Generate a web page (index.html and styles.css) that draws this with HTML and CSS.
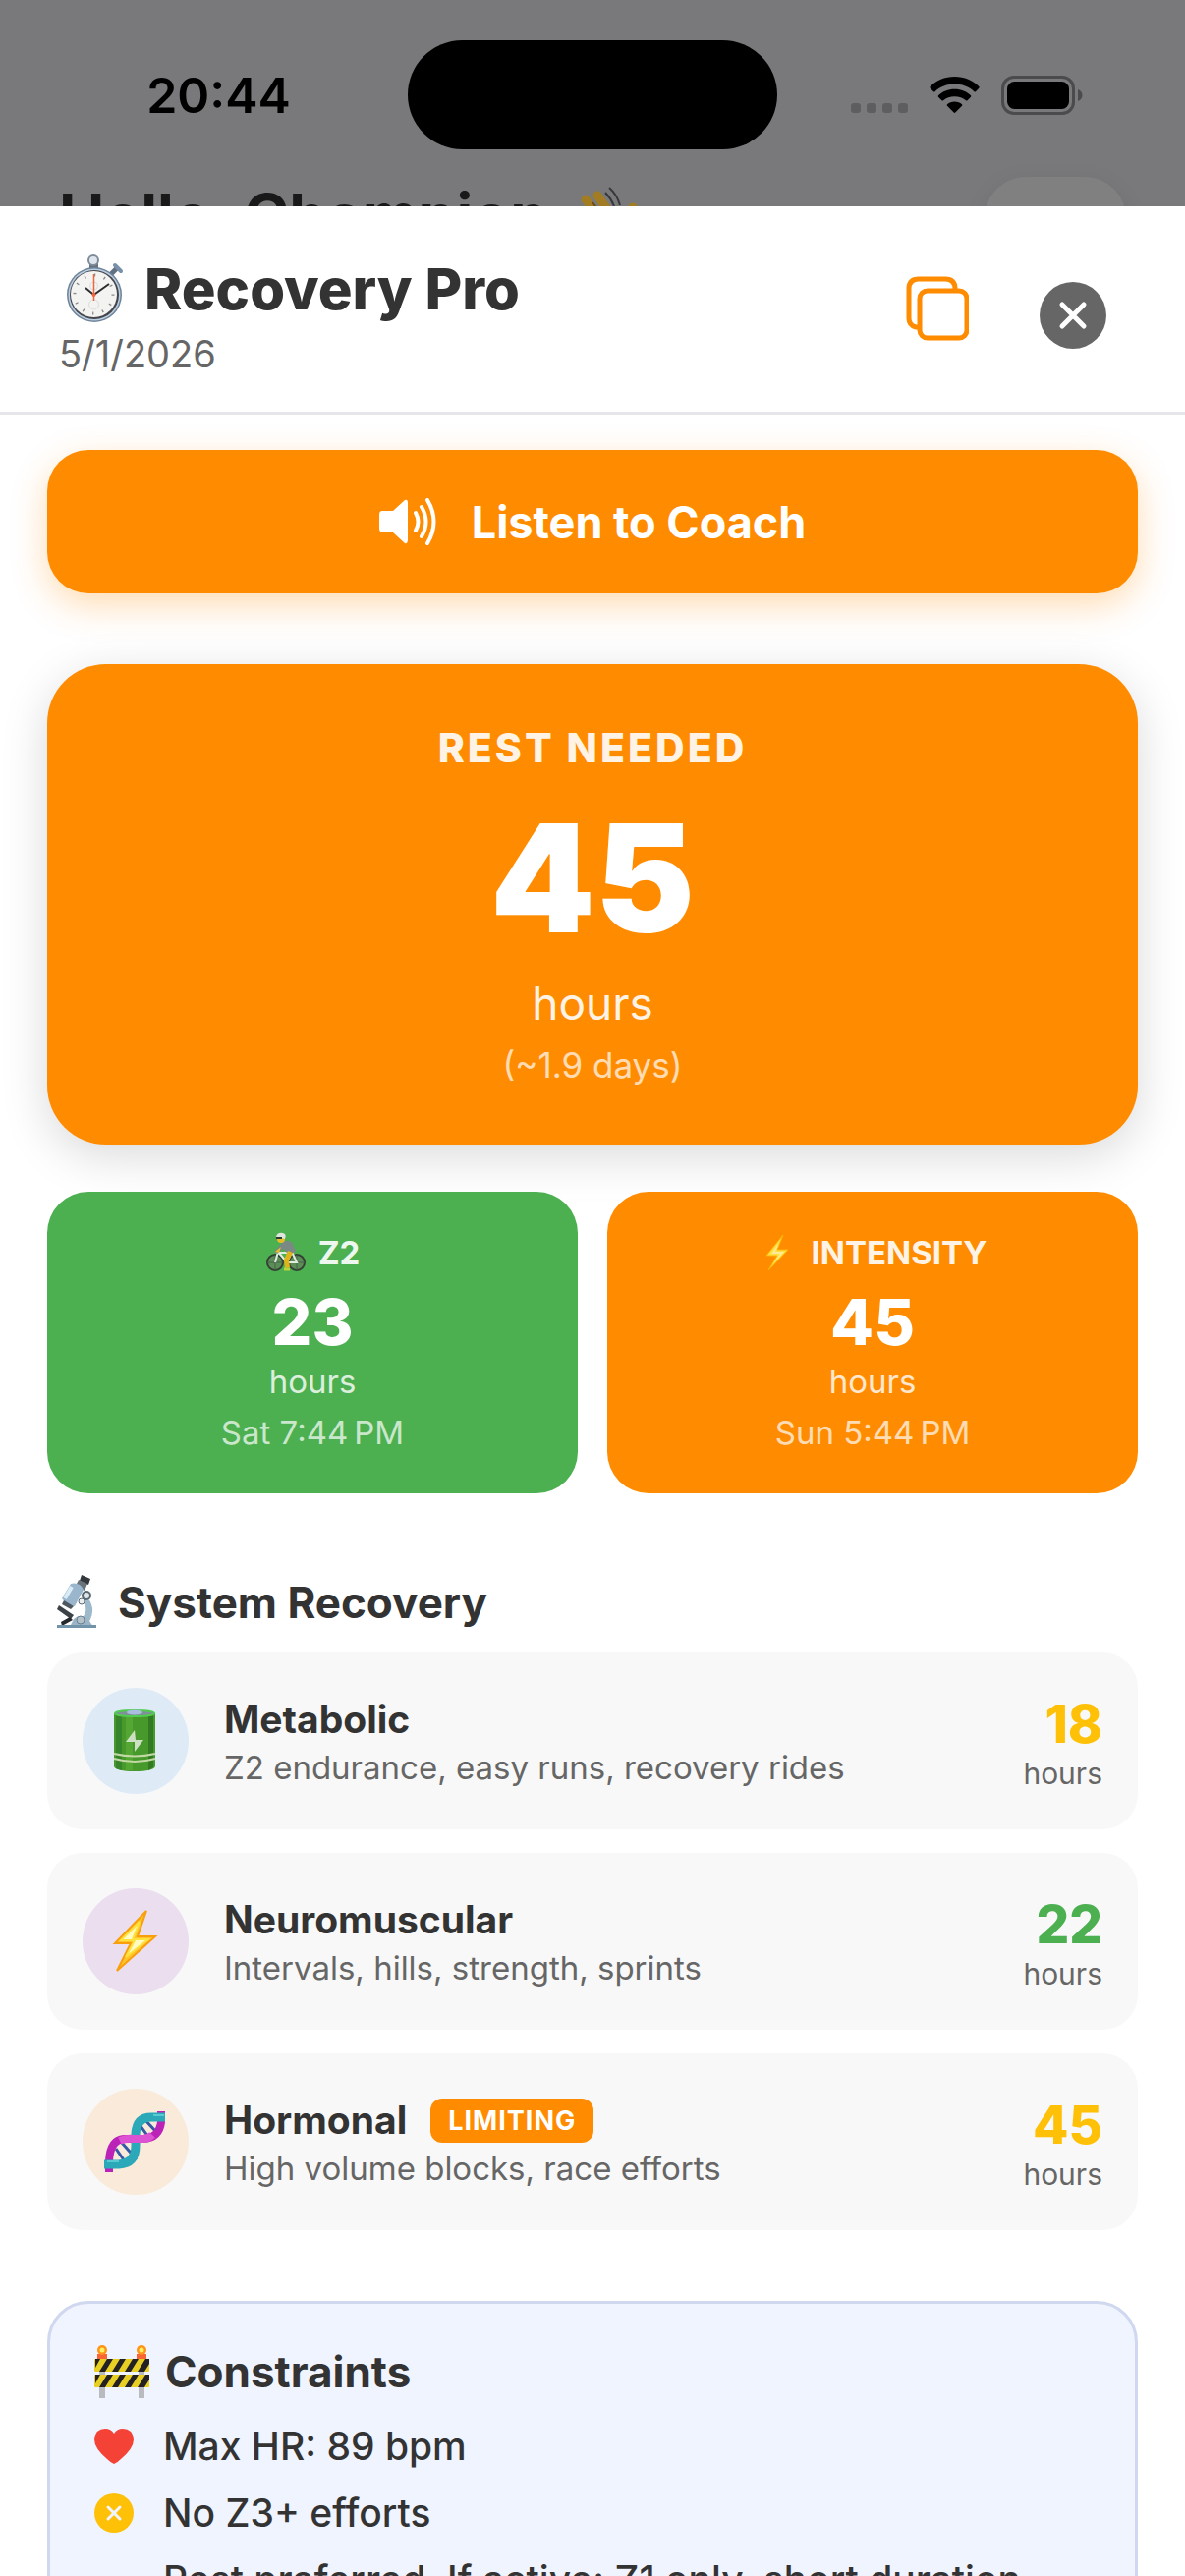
FILE: index.html
```html
<!DOCTYPE html>
<html lang="en">
  <head>
    <meta charset="UTF-8" />
    <meta name="viewport" content="width=device-width, initial-scale=1.0" />
    <title>Recovery Pro</title>
    <link rel="stylesheet" href="styles.css">
  </head>
  <body>
    <div class="app">
      <!-- Dimmed home screen behind the sheet -->
      <div class="backdrop">
        <div class="status-bar">
          <span class="status-time">20:44</span>
          <div class="island"></div>
          <div class="status-icons">
            <svg class="dots" viewBox="0 0 58 38" aria-hidden="true">
              <g fill="#5e5e60">
                <rect x="0" y="27" width="10" height="10" rx="3" />
                <rect x="16" y="27" width="10" height="10" rx="3" />
                <rect x="32" y="27" width="10" height="10" rx="3" />
                <rect x="48" y="27" width="10" height="10" rx="3" />
              </g>
            </svg>
            <svg class="wifi" viewBox="0 0 51 38" aria-hidden="true">
              <path d="M25.500 0C35.500 0 44.500 4 50.500 10.200Q51 11 50.300 11.800L47 15.200Q46.200 15.800 45.400 15.200C40 10.300 33 7.600 25.500 7.600S11 10.300 5.600 15.200Q4.800 15.800 4 15.200L.7 11.800Q0 11 .5 10.200C6.500 4 15.500 0 25.500 0Z" />
              <path d="M25.500 12.800C32 12.800 37.700 15.200 42 19.200Q42.700 20 42 20.800L38.500 24.200Q37.800 24.800 37 24.200C34 21.700 30 20.200 25.500 20.200S17 21.700 14 24.200Q13.200 24.800 12.500 24.200L9 20.800Q8.300 20 9 19.200C13.300 15.200 19 12.800 25.500 12.800Z" />
              <path d="M25.500 25.500C28.500 25.500 31 26.500 33 28.200Q33.800 29 33 29.800L26.300 36.600Q25.500 37.300 24.700 36.600L18 29.800Q17.200 29 18 28.200C20 26.500 22.500 25.500 25.500 25.500Z" />
            </svg>
            <svg class="battery" viewBox="0 0 83 40" aria-hidden="true">
              <rect x="1.500" y="1.500" width="72" height="37" rx="11.500" fill="none" stroke="#4b4b4d" stroke-width="3" />
              <rect x="6" y="6" width="63" height="28" rx="7.500" />
              <path d="M78 14C81 15.200 82.500 17.500 82.500 20S81 24.800 78 26Z" fill="#4b4b4d" />
            </svg>
          </div>
        </div>
        <div class="greeting-row">
          <div class="greeting">
            Hello, Champion
            <svg class="wave" viewBox="0 0 64 64" aria-hidden="true">
              <g stroke="#a17c22" stroke-width="9" stroke-linecap="round" fill="none">
                <path d="M6 30L24 52M10 15L32 44M22 11L42 39" />
                <path d="M47 49C50 43 52 34 58 23" />
              </g>
              <path d="M12 40L28 28L46 36L52 46Q50 62 34 62Q22 60 12 40Z" fill="#a17c22" />
              <path d="M17 18L32 38" stroke="#6d4c13" stroke-width="2" />
              <path d="M34 3Q42 10 45 21M30 8Q36 14 39 22" fill="none" stroke="#38383a" stroke-width="2" />
            </svg>
          </div>
          <div class="avatar"></div>
        </div>
      </div>

      <div class="sheet">
        <header class="sheet-header">
          <div>
            <h1>
              <svg class="emoji-title" viewBox="0 0 72 72" aria-hidden="true">
                <rect x="31" y="9" width="9" height="12" fill="#66727f" />
                <circle cx="35" cy="7" r="5" fill="#dfe5ec" stroke="#7e8b9b" stroke-width="2" />
                <path d="M53 21L59 15" stroke="#5f7183" stroke-width="5" />
                <path d="M57 12L63 18" stroke="#7890a8" stroke-width="4" stroke-linecap="round" />
                <circle cx="36" cy="42" r="28" fill="#6e8399" />
                <circle cx="36" cy="42" r="26.500" fill="#b9cee0" />
                <circle cx="36" cy="42" r="25" fill="#45454b" />
                <circle cx="35.500" cy="41.500" r="23.500" fill="#f3f3f2" />
                <circle cx="35.500" cy="41.500" r="19.500" fill="none" stroke="#888" stroke-width="3" stroke-dasharray="1.300 8.900" />
                <circle cx="35.500" cy="52" r="5" fill="none" stroke="#ddd" />
                <circle cx="35.500" cy="33" r="4" fill="none" stroke="#ddd" />
                <path d="M27 35L35.500 42L51 31" fill="none" stroke="#2d2d30" stroke-width="2" />
                <path d="M35.500 21V48" stroke="#f2643c" stroke-width="1.500" />
                <circle cx="35.500" cy="42" r="2" fill="#f2643c" />
              </svg>
              Recovery Pro
            </h1>
            <p class="date">5/1/2026</p>
          </div>
          <div class="actions">
            <button type="button" class="icon-button" aria-label="Copy">
              <svg class="icon-copy" viewBox="0 0 64 80" aria-hidden="true">
                <g fill="none" stroke="#ff8c00" stroke-width="5">
                  <path d="M12 52H10Q3 50 3 43V13Q3 3 13 3H40Q50 3 50 13V14" />
                  <rect x="14" y="15" width="48" height="48" rx="8" />
                </g>
              </svg>
            </button>
            <button type="button" class="icon-button" aria-label="Close">
              <svg class="icon-close" viewBox="0 0 68 68" aria-hidden="true">
                <circle cx="34" cy="34" r="34" fill="#666" />
                <path d="M23 23L45 45M45 23L23 45" stroke="#fff" stroke-width="5" stroke-linecap="round" />
              </svg>
            </button>
          </div>
        </header>

        <main class="content">
          <button type="button" class="listen">
            <svg class="icon-speaker" viewBox="0 0 60 48" aria-hidden="true">
              <path d="M3 13H14L26 2Q29 1 29 5V42Q29 47 26 46L14 35H3Q0 34 0 31V17Q0 13 3 13Z" fill="#fff" />
              <path d="M37 15Q42 24 37 33M43 9Q52 24 43 39M49 2Q62 24 49 46" fill="none" stroke="#fff" stroke-width="4" stroke-linecap="round" />
            </svg>
            Listen to Coach
          </button>

          <section class="rest-card">
            <h2 class="rest-label">REST NEEDED</h2>
            <p class="rest-value">45</p>
            <p class="rest-unit">hours</p>
            <p class="rest-days">(~1.9 days)</p>
          </section>

          <div class="zones">
            <section class="zone zone-green">
              <h3>
                <svg class="emoji-small" viewBox="0 0 42 42" aria-hidden="true">
                  <g fill="#5f8a58" stroke="#303431" stroke-width="2">
                    <circle cx="10" cy="31" r="8" />
                    <circle cx="32" cy="31" r="8" />
                  </g>
                  <path d="M10 23V39M2 31H18M32 23V39M24 31H40" stroke="#47594a" stroke-width="1" />
                  <path d="M10 31L13 20L22 31L27 20M13 21H26M22 31H32L27 20" fill="none" stroke="#f0f3f0" stroke-width="2" />
                  <path d="M17 11Q24 6 28 12L31 20L24 23L18 17L12 22L9 20Z" fill="#81858b" />
                  <path d="M23 19L28 21L24 29L25 36L20 37L19 28Z" fill="#f1b414" />
                  <path d="M16 15L10 20L14 21Z" fill="#f6bf28" />
                  <circle cx="16" cy="7" r="4" fill="#f6bf28" />
                  <path d="M11 5Q12 0 18 1Q22 2 20 7Z" fill="#ececec" />
                  <path d="M11 6H17" stroke="#27302e" stroke-width="2" />
                  <path d="M19 38H25" stroke="#c6d93a" stroke-width="3" />
                </svg>
                Z2
              </h3>
              <p class="zone-value">23</p>
              <p class="zone-unit">hours</p>
              <p class="zone-time">Sat 7:44&#8239;PM</p>
            </section>
            <section class="zone zone-orange">
              <h3>
                <svg class="emoji-small" viewBox="0 0 42 42" aria-hidden="true">
                  <path d="M25 3L8 24H19L10 39L30 18H19Z" fill="#ffe94f" stroke="#ffb900" stroke-width="1" />
                  <path d="M21 11L13 22H22L15 32L26 20H17Z" fill="#fff6a4" />
                </svg>
                INTENSITY
              </h3>
              <p class="zone-value">45</p>
              <p class="zone-unit">hours</p>
              <p class="zone-time">Sun 5:44&#8239;PM</p>
            </section>
          </div>

          <!-- System Recovery Section -->
          <section class="systems">
            <h2 class="section-title">
              <svg class="emoji-heading" viewBox="0 0 56 56" aria-hidden="true">
                <path d="M35 0L44 4L42 10L33 6Z" fill="#34383c" />
                <path d="M32 5L41 9L38 16L29 11Z" fill="#69737a" />
                <path d="M24 9Q33 7 37 15L28 32Q20 31 15 24Z" fill="#99b6cc" />
                <path d="M25 12L18 24" stroke="#d9ebf6" stroke-width="4" />
                <path d="M17 26L27 32L24 35L15 30Z" fill="#4d5960" />
                <path d="M38 20Q52 33 42 49L32 47Q45 37 35 25Z" fill="#9eb9ca" />
                <circle cx="40" cy="21" r="4" fill="#e2e4e5" stroke="#596975" stroke-width="2" />
                <circle cx="35" cy="27" r="3" fill="#eee" stroke="#596975" stroke-width="1" />
                <path d="M12 31L27 41L24 45L10 35Z" fill="#3c4348" />
                <path d="M14 48L23 43L26 46L15 52Z" fill="#24292d" />
                <path d="M27 45Q34 38 43 47L47 53H23Z" fill="#9bb5c6" />
                <circle cx="34" cy="46" r="4" fill="#b6c1c7" stroke="#668093" stroke-width="1" />
                <path d="M10 51H50V54H10Z" fill="#7194ab" />
              </svg>
              System Recovery
            </h2>

            <div class="system">
              <div class="system-icon blue">
                <svg viewBox="0 0 64 64" aria-hidden="true">
                  <path d="M10 4V58Q12 63 31 63T52 58V4Z" fill="#47992b" />
                  <path d="M12 5V60L18 62V5Z" fill="#37852a" />
                  <path d="M22 6V62H29V6Z" fill="#62b53c" opacity=".5" />
                  <path d="M45 5V62L50 59V5Z" fill="#317c22" />
                  <ellipse cx="31" cy="4" rx="20" ry="3" fill="#7d9196" stroke="#51cc50" stroke-width="2" />
                  <ellipse cx="31" cy="3" rx="8" ry="2.500" fill="#a9bede" />
                  <path d="M10 45Q31 50 52 45M10 50Q31 56 52 50" fill="none" stroke="#c2d8a5" stroke-width="2" />
                  <path d="M31 21L22 33H31V43L40 31H32Z" fill="#cee0c4" />
                </svg>
              </div>
              <div class="system-info">
                <h3>Metabolic</h3>
                <p>Z2 endurance, easy runs, recovery rides</p>
              </div>
              <div class="system-hours">
                <strong class="amber">18</strong>
                <span>hours</span>
              </div>
            </div>

            <div class="system">
              <div class="system-icon purple">
                <svg viewBox="0 0 64 64" aria-hidden="true">
                  <path d="M43 1L11 34H27L13 62L52 27H34Z" fill="#ffc42b" stroke="#fa9f0c" stroke-width="2" />
                  <path d="M36 12L17 31H31L22 48L45 30H29Z" fill="#fffbc2" stroke="#ffe23e" stroke-width="2" />
                </svg>
              </div>
              <div class="system-info">
                <h3>Neuromuscular</h3>
                <p>Intervals, hills, strength, sprints</p>
              </div>
              <div class="system-hours">
                <strong class="green">22</strong>
                <span>hours</span>
              </div>
            </div>

            <div class="system">
              <div class="system-icon peach">
                <svg viewBox="0 0 64 64" aria-hidden="true">
                  <path d="M35 13L45 27M41 9L53 22M12 39L23 55M18 33L33 50" stroke="#3459a6" stroke-width="3" />
                  <path d="M5 63V52Q6 30 20 29H40Q56 28 58 12V1" fill="none" stroke="#bb22b8" stroke-width="8" />
                  <path d="M0 55H15Q32 54 32 36V24Q33 7 48 7H62" fill="none" stroke="#2ba9b9" stroke-width="9" />
                  <path d="M16 31Q22 28 30 29H40Q45 29 49 25" fill="none" stroke="#dc52d2" stroke-width="8" />
                  <path d="M3 52H15M50 5H61" stroke="#59cad1" stroke-width="2" />
                </svg>
              </div>
              <div class="system-info">
                <h3>Hormonal <span class="badge">LIMITING</span></h3>
                <p>High volume blocks, race efforts</p>
              </div>
              <div class="system-hours">
                <strong class="amber">45</strong>
                <span>hours</span>
              </div>
            </div>
          </section>

          <!-- Constraints Section -->
          <section class="constraints">
            <h2 class="section-title">
              <svg class="emoji-heading" viewBox="0 0 56 56" aria-hidden="true">
                <path d="M5 16H11V55H5ZM45 16H51V55H45Z" fill="#b9bbbf" />
                <rect x="3" y="10" width="10" height="6" fill="#fa6333" />
                <rect x="43" y="10" width="10" height="6" fill="#fa6333" />
                <circle cx="8" cy="6" r="5" fill="#ff9418" />
                <circle cx="48" cy="6" r="5" fill="#ff9418" />
                <circle cx="8" cy="6" r="2.500" fill="#fff063" />
                <circle cx="48" cy="6" r="2.500" fill="#fff063" />
                <rect x="0" y="15" width="56" height="13" rx="1" fill="#e7cf24" />
                <rect x="0" y="31" width="56" height="13" rx="1" fill="#e7cf24" />
                <path d="M1 15H6L1 24ZM13 15H19L11 28H5ZM26 15H32L24 28H18ZM39 15H45L37 28H31ZM52 15H56V20L51 28H44ZM1 31H6L1 40ZM13 31H19L11 44H5ZM26 31H32L24 44H18ZM39 31H45L37 44H31ZM52 31H56V36L51 44H44Z" fill="#242124" />
              </svg>
              Constraints
            </h2>
            <ul>
              <li>
                <svg class="bullet" viewBox="0 0 40 40" aria-hidden="true">
                  <path d="M20 38Q17 37 13 33Q0 22 0 13Q1 2 11 2Q17 2 20 7Q23 2 29 2Q39 2 40 13Q40 22 27 33Q23 37 20 38Z" fill="#f44336" />
                </svg>
                Max HR: 89 bpm
              </li>
              <li>
                <svg class="bullet" viewBox="0 0 40 40" aria-hidden="true">
                  <circle cx="20" cy="20" r="20" fill="#ffc107" />
                  <path d="M14 14L26 26M26 14L14 26" stroke="#f0f4ff" stroke-width="3" stroke-linecap="round" />
                </svg>
                No Z3+ efforts
              </li>
              <li>
                <span class="bullet"></span>
                Rest preferred. If active: Z1 only, short duration
              </li>
            </ul>
          </section>
        </main>
      </div>
    </div>
  </body>
</html>
```
FILE: styles.css
```css
* {
  box-sizing: border-box;
}

body {
  margin: 0;
  font-family: Inter, "Liberation Sans", sans-serif;
  color: #333;
  background-color: white;
}

h1,
h2,
h3,
p,
ul {
  margin: 0;
  padding: 0;
}

svg {
  display: block;
  flex-shrink: 0;
}

button {
  font-family: inherit;
  border: none;
  padding: 0;
  cursor: pointer;
}

.app {
  display: flex;
  flex-direction: column;
  height: 100vh;
  overflow: hidden;
}

/* Home screen */
.backdrop {
  height: 210px;
  flex-shrink: 0;
  padding-top: 41px;
  overflow: hidden;
  background-color: #79797b;
}

.status-bar {
  display: grid;
  grid-template-columns: 1fr 376px 1fr;
  align-items: center;
  justify-items: center;
  padding: 0 30px;
  color: black;
}

.status-time {
  font-size: 50px;
  font-weight: 600;
}

.island {
  width: 376px;
  height: 111px;
  border-radius: 56px;
  background-color: black;
}

.status-icons {
  display: flex;
  align-items: center;
  gap: 22px;
}

.dots {
  width: 58px;
  height: 38px;
}

.wifi {
  width: 51px;
  height: 38px;
}

.battery {
  width: 83px;
  height: 40px;
}

.greeting-row {
  display: flex;
  justify-content: space-between;
  align-items: flex-start;
  padding: 28px 60px 0;
}

.greeting {
  display: flex;
  align-items: center;
  gap: 28px;
  font-size: 62px;
  font-weight: 700;
  line-height: 80px;
  color: #19191a;
}

.wave {
  width: 64px;
  height: 64px;
}

.avatar {
  width: 144px;
  height: 144px;
  border-radius: 42px;
  background-color: #808080;
  box-shadow: 0 6px 24px rgba(0, 0, 0, 0.08);
}

/* Sheet header */
.sheet {
  background-color: white;
}

.sheet-header {
  display: flex;
  justify-content: space-between;
  align-items: center;
  padding: 48px 80px 35px 60px;
  border-bottom: 3px solid #e5e5ea;
}

h1 {
  display: flex;
  align-items: center;
  gap: 15px;
  font-size: 58px;
  font-weight: 800;
  line-height: 72px;
}

.emoji-title {
  width: 72px;
  height: 72px;
}

.date {
  margin-top: 6px;
  font-size: 38px;
  line-height: 48px;
  color: #666;
}

.actions {
  display: flex;
  align-items: center;
  gap: 72px;
}

.icon-button {
  background: none;
}

.icon-copy {
  width: 64px;
  height: 80px;
}

.icon-close {
  width: 68px;
  height: 68px;
}

.content {
  padding: 36px 48px;
}

.listen {
  display: flex;
  justify-content: center;
  align-items: center;
  gap: 34px;
  width: 100%;
  height: 146px;
  margin-bottom: 72px;
  border-radius: 42px;
  background-color: #ff8c00;
  color: white;
  font-size: 45px;
  font-weight: 700;
  box-shadow: 0 12px 36px rgba(255, 140, 0, 0.3);
}

.icon-speaker {
  width: 60px;
  height: 48px;
}

/* Rest card */
.rest-card {
  padding: 60px 48px 57px;
  border-radius: 60px;
  background-color: #ff8c00;
  color: white;
  text-align: center;
  box-shadow: 0 12px 48px rgba(0, 0, 0, 0.15);
}

.rest-label {
  font-size: 41px;
  font-weight: 800;
  line-height: 50px;
  letter-spacing: 3px;
  opacity: 0.9;
}

.rest-value {
  margin-top: 14px;
  font-size: 152px;
  font-weight: 900;
  line-height: 188px;
}

.rest-unit {
  margin-top: 4px;
  font-size: 46px;
  line-height: 58px;
  opacity: 0.9;
}

.rest-days {
  margin-top: 10px;
  font-size: 35px;
  line-height: 48px;
  opacity: 0.7;
}

/* Zone cards */
.zones {
  display: grid;
  grid-template-columns: 1fr 1fr;
  gap: 30px;
  margin-top: 48px;
}

.zone {
  padding: 41px 24px 40px;
  border-radius: 42px;
  color: white;
  text-align: center;
}

.zone-green {
  background-color: #4caf50;
}

.zone-orange {
  background-color: #ff8c00;
}

.zone h3 {
  display: flex;
  justify-content: center;
  align-items: center;
  gap: 12px;
  font-size: 33px;
  font-weight: 700;
  line-height: 42px;
  opacity: 0.9;
}

.emoji-small {
  width: 42px;
  height: 42px;
}

.zone-value {
  margin-top: 12px;
  font-size: 64px;
  font-weight: 800;
  line-height: 76px;
}

.zone-unit {
  font-size: 33px;
  line-height: 44px;
  opacity: 0.8;
}

.zone-time {
  margin-top: 8px;
  font-size: 33px;
  line-height: 44px;
  opacity: 0.7;
}

/* System recovery */
.systems {
  display: flex;
  flex-direction: column;
  gap: 24px;
  margin-top: 84px;
}

.section-title {
  display: flex;
  align-items: center;
  gap: 16px;
  font-size: 44px;
  font-weight: 700;
  line-height: 54px;
}

.emoji-heading {
  width: 56px;
  height: 56px;
}

.systems .section-title {
  height: 54px;
}

.system {
  display: flex;
  align-items: center;
  padding: 36px;
  border-radius: 36px;
  background-color: #f8f8f8;
}

.system-icon {
  display: flex;
  justify-content: center;
  align-items: center;
  width: 108px;
  height: 108px;
  border-radius: 50%;
}

.system-icon svg {
  width: 64px;
  height: 64px;
}

.blue {
  background-color: #deebf7;
}

.purple {
  background-color: #ebdeef;
}

.peach {
  background-color: #faeada;
}

.system-info {
  flex: 1;
  margin-left: 36px;
}

.system-info h3 {
  display: flex;
  align-items: center;
  gap: 24px;
  font-size: 39px;
  font-weight: 700;
  line-height: 54px;
}

.system-info p {
  font-size: 33px;
  line-height: 44px;
  color: #666;
}

.badge {
  padding: 0 18px;
  border-radius: 12px;
  background-color: #ff8c00;
  color: white;
  font-size: 27px;
  line-height: 45px;
  letter-spacing: 1px;
}

.system-hours {
  display: flex;
  flex-direction: column;
  align-items: flex-end;
}

.system-hours strong {
  font-size: 53px;
  font-weight: 800;
  line-height: 66px;
}

.system-hours span {
  font-size: 30px;
  line-height: 34px;
  color: #666;
}

.amber {
  color: #ffc107;
}

.green {
  color: #4caf50;
}

/* Constraints */
.constraints {
  margin-top: 72px;
  padding: 45px;
  border: 3px solid #d0d8f0;
  border-radius: 42px;
  background-color: #f0f4ff;
}

.constraints .section-title {
  height: 48px;
}

.constraints ul {
  display: flex;
  flex-direction: column;
  gap: 18px;
  margin-top: 27px;
  list-style: none;
}

.constraints li {
  display: flex;
  align-items: center;
  gap: 30px;
  font-size: 39px;
  font-weight: 500;
  line-height: 50px;
}

.bullet {
  flex-shrink: 0;
  width: 40px;
  height: 40px;
}
```
